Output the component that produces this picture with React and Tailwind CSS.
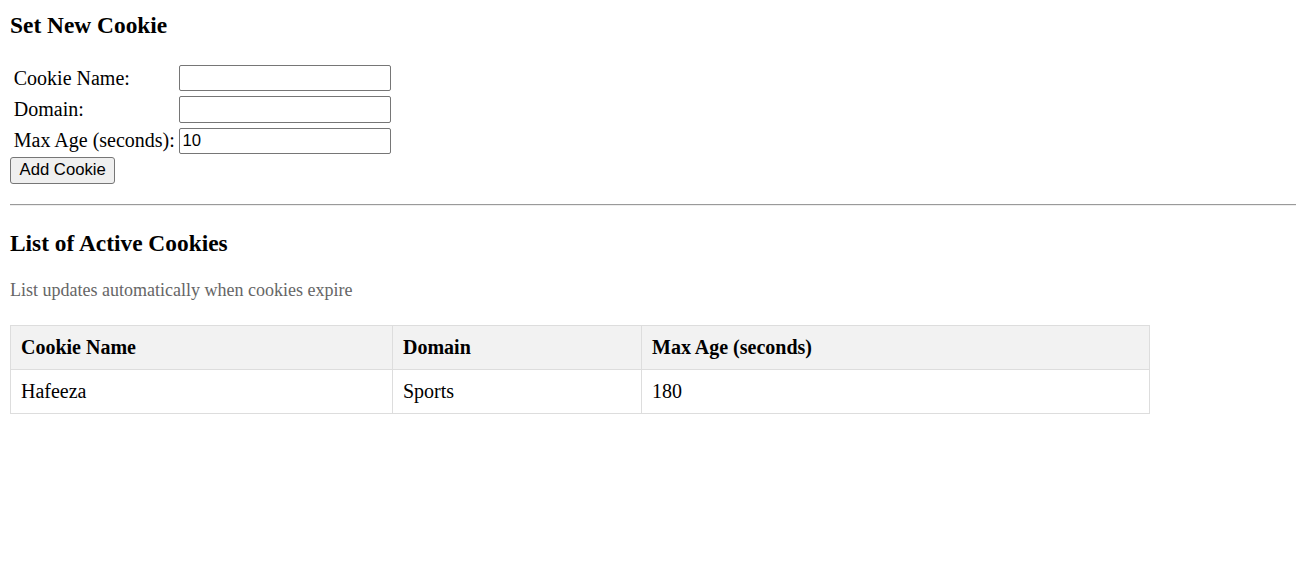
import { useState } from 'react';

const serif = { fontFamily: '"Liberation Serif", "Times New Roman", serif' };

const App = () => {
  const [name, setName] = useState('');
  const [domain, setDomain] = useState('');
  const [maxAge, setMaxAge] = useState('10');
  const [cookies, setCookies] = useState([{ name: 'Hafeeza', domain: 'Sports', maxAge: 180 }]);

  const addCookie = () => {
    if (!name) return;
    setCookies([...cookies, { name, domain, maxAge: Number(maxAge) }]);
    setName('');
    setDomain('');
  };

  const inputClass =
    "block w-[212px] h-[26.5px] border border-[#767676] rounded-[2px] px-[3px] text-[16.7px] text-black bg-white outline-none font-['Liberation_Sans',Arial,sans-serif]";

  return (
    <div className="bg-white text-black min-h-[562px] pl-[10px] pt-[12px] text-[20px] overflow-hidden" style={serif}>
      <h3 className="text-[23.4px] font-bold leading-[26.9px]">Set New Cookie</h3>

      <div className="mt-[23.4px] flex flex-col pl-[2.5px] pt-[2.5px]">
        <div className="flex flex-col gap-[4.5px]">
          {[
            ['Cookie Name:', name, setName],
            ['Domain:', domain, setDomain],
            ['Max Age (seconds):', maxAge, setMaxAge],
          ].map(([label, value, setter]) => (
            <div key={label} className="flex items-center h-[26.8px]">
              <span className="w-[166px] pl-[1.25px] leading-[23px]">{label}</span>
              <input className={inputClass} value={value} onChange={(e) => setter(e.target.value)} />
            </div>
          ))}
        </div>
      </div>
      <button
        onClick={addCookie}
        className="block mt-[3px] h-[26.5px] px-[8.5px] border border-[#767676] rounded-[3px] bg-[#efefef] text-[16.7px] leading-[20px] font-['Liberation_Sans',Arial,sans-serif]"
      >
        Add Cookie
      </button>

      <div className="mt-[20.5px] w-[1286px] border-t-[1.5px] border-b border-t-[#9a9a9a] border-b-[#eeeeee]" />

      <h3 className="mt-[23.4px] text-[23.4px] font-bold leading-[26.9px]">List of Active Cookies</h3>
      <p className="mt-[23.4px] text-[18px] leading-[20.7px] text-[#666666]">
        List updates automatically when cookies expire
      </p>

      <table className="mt-[24px] w-[1140px] border-collapse text-[20px]">
        <thead>
          <tr className="bg-[#f2f2f2]">
            <th className="w-[382px] border border-[#dddddd] px-[10px] py-[10px] text-left font-bold leading-[23px]">Cookie Name</th>
            <th className="w-[249px] border border-[#dddddd] px-[10px] py-[10px] text-left font-bold leading-[23px]">Domain</th>
            <th className="border border-[#dddddd] px-[10px] py-[10px] text-left font-bold leading-[23px]">Max Age (seconds)</th>
          </tr>
        </thead>
        <tbody>
          {cookies.map((c) => (
            <tr key={c.name}>
              <td className="border border-[#dddddd] px-[10px] py-[10px] leading-[23px]">{c.name}</td>
              <td className="border border-[#dddddd] px-[10px] py-[10px] leading-[23px]">{c.domain}</td>
              <td className="border border-[#dddddd] px-[10px] py-[10px] leading-[23px]">{c.maxAge}</td>
            </tr>
          ))}
        </tbody>
      </table>
    </div>
  );
};

export default App;
